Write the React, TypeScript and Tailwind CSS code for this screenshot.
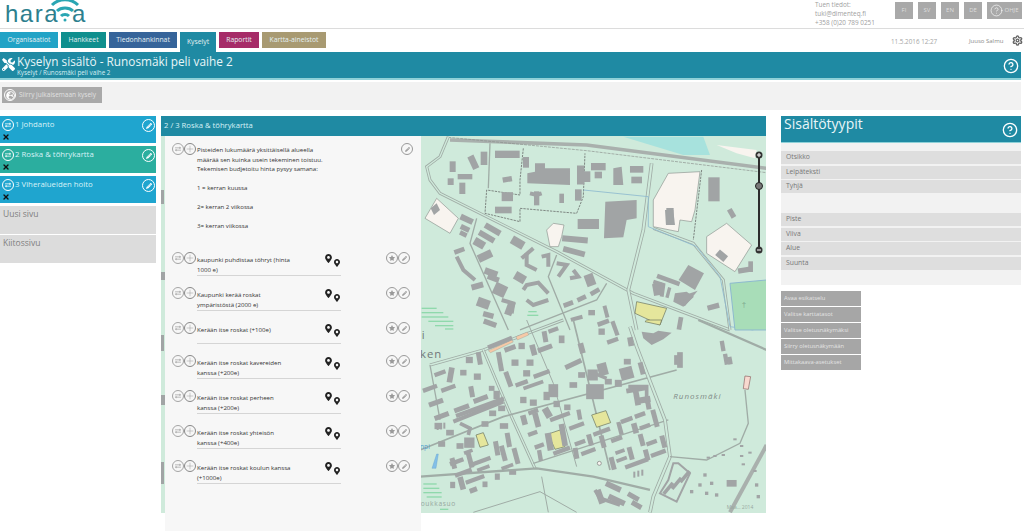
import { CircleHelp, Settings, Plus, X } from "lucide-react";
import { FaGlobeEurope, FaMapMarkerAlt, FaTools, FaStar, FaPencilAlt, FaExchangeAlt } from "react-icons/fa";

const tabs = [
  { label: "Organisaatiot", cls: "w-[58px] bg-[#22a3c6]" },
  { label: "Hankkeet", cls: "w-[45px] bg-[#0f8f8e]" },
  { label: "Tiedonhankinnat", cls: "w-[68px] bg-[#36649a]" },
  { label: "Kyselyt", cls: "w-[36px] h-[20px] bg-[#1f8aa3]" },
  { label: "Raportit", cls: "w-[40px] bg-[#a62c68]" },
  { label: "Kartta-aineistot", cls: "w-[64px] bg-[#a89a72]" },
];

const rows = [
  { h: "h-[24px]", first: "kaupunki puhdistaa töhryt (hinta", second: "1000 e)" },
  { h: "h-[24px]", first: "Kaupunki kerää roskat", second: "ympäristöstä (2000 e)" },
  { h: "h-[22px]", first: "Kerään itse roskat (+100e)", second: "" },
  { h: "h-[24px]", first: "Kerään itse roskat kavereiden", second: "kanssa (+200e)" },
  { h: "h-[24px]", first: "Kerään itse roskat perheen", second: "kanssa (+200e)" },
  { h: "h-[24px]", first: "Kerään itse roskat yhteisön", second: "kanssa (+400e)" },
  { h: "h-[24px]", first: "Kerään itse roskat koulun kanssa", second: "(+1000e)" },
];

type B = [number, number, number, number, number];

// buildings in crop coordinates: cx, cy, w, h, rotation
const northBlocks: B[] = [
  [98, 110, 16, 30, 0], [92, 155, 16, 18, 0], [160, 97, 18, 40, -25], [192, 85, 18, 38, 0], [262, 73, 72, 20, 0],
  [135, 140, 42, 14, 0], [127, 175, 16, 32, 0], [262, 148, 26, 14, -10], [318, 97, 16, 30, 0], [482, 135, 20, 55, 0],
  [500, 140, 20, 30, 0], [535, 110, 42, 20, 0], [535, 135, 20, 18, 0], [650, 118, 38, 18, 0], [650, 150, 30, 18, 0],
  [262, 200, 32, 25, 0], [425, 205, 12, 26, 0], [475, 195, 18, 32, 0], [250, 240, 48, 18, 0], [505, 282, 62, 28, 0],
  [465, 328, 75, 16, 5], [462, 365, 65, 15, 15], [218, 298, 50, 16, 30], [140, 268, 38, 16, 25], [135, 295, 26, 14, 25],
  [130, 312, 20, 12, 25], [178, 340, 32, 22, 30], [200, 320, 50, 15, 30], [195, 378, 42, 22, -25], [118, 362, 30, 12, -20],
  [293, 338, 38, 24, 30], [882, 178, 32, 70, 0], [935, 250, 14, 26, -30], [905, 377, 30, 20, 40], [745, 450, 70, 12, 20],
  [714, 478, 28, 34, -10], [745, 488, 8, 30, 15], [880, 530, 34, 14, -15], [213, 428, 38, 18, 20], [172, 468, 34, 16, -15],
  [220, 445, 34, 14, 20], [240, 480, 36, 34, 25], [190, 520, 36, 26, 20], [205, 555, 30, 14, 15], [210, 580, 38, 14, 20],
  [510, 450, 26, 34, -20], [525, 485, 28, 12, -30], [485, 505, 26, 12, -25], [445, 522, 28, 12, -20], [515, 548, 18, 14, 0],
  [558, 545, 10, 34, -15], [470, 565, 34, 10, -15], [550, 578, 34, 12, -20], [780, 580, 12, 36, 10], [300, 443, 32, 24, 30],
  [270, 535, 20, 40, 20], [975, 420, 40, 14, -10], [992, 410, 12, 30, 0], [750, 258, 20, 46, 0], [350, 205, 14, 40, 0],
];

const southBlocks: B[] = [
  [240, 68, 75, 10, -22], [375, 50, 12, 30, -10], [400, 30, 28, 10, -20], [425, 58, 14, 20, 0], [340, 90, 14, 30, -15],
  [375, 85, 42, 12, -20], [270, 85, 32, 12, -20], [305, 78, 16, 16, 0], [240, 125, 12, 55, -10], [285, 128, 18, 16, 0],
  [330, 128, 18, 16, 0], [320, 160, 18, 16, 0], [365, 162, 48, 10, -20], [265, 178, 12, 44, -20], [305, 190, 36, 10, -20],
  [340, 195, 60, 8, -20], [178, 115, 12, 35, -10], [148, 120, 18, 16, 0], [130, 158, 16, 14, 0], [172, 170, 18, 16, 0],
  [60, 160, 32, 10, -20], [92, 165, 14, 42, 10], [85, 205, 42, 10, -20], [30, 205, 42, 10, -20], [155, 215, 12, 30, -10],
  [182, 237, 42, 12, -20], [215, 205, 14, 12, 0], [230, 225, 16, 22, 0], [48, 248, 42, 12, -20], [125, 265, 44, 12, -20],
  [65, 288, 42, 12, -20], [180, 262, 150, 10, -20], [245, 265, 18, 14, 0], [218, 280, 18, 14, 0], [310, 240, 16, 16, 0],
  [340, 248, 18, 16, 0], [380, 228, 16, 22, 0], [410, 252, 16, 16, 0], [442, 262, 16, 14, 0], [400, 212, 26, 36, 0],
  [460, 195, 20, 14, 0], [485, 165, 18, 14, 0], [518, 165, 28, 30, 0], [548, 148, 26, 34, -15], [595, 190, 18, 18, 0],
  [565, 185, 18, 14, 0], [620, 160, 36, 34, -15], [622, 125, 18, 14, 0], [665, 145, 12, 34, -15], [460, 132, 50, 12, -25],
  [485, 85, 14, 28, -15], [545, 35, 16, 16, 0], [578, 62, 32, 10, -20], [585, 25, 10, 42, -20], [632, 65, 14, 24, -10],
  [525, 215, 50, 42, 0], [650, 208, 60, 12, -10], [670, 240, 40, 16, -10], [650, 230, 14, 50, -10], [685, 255, 12, 24, -10],
  [420, 290, 60, 10, -20], [470, 318, 44, 10, -20], [382, 278, 18, 28, -30], [350, 300, 14, 40, -15], [312, 300, 14, 26, -15],
  [340, 275, 28, 10, -20], [338, 340, 26, 10, -20], [358, 378, 26, 10, -20], [388, 365, 16, 50, -10], [430, 345, 14, 64, -10],
  [425, 392, 50, 10, -20], [360, 407, 10, 30, -10], [478, 284, 10, 28, -10], [468, 400, 12, 30, -10], [480, 368, 30, 10, -20],
  [510, 360, 12, 32, -15], [505, 395, 42, 10, -20], [548, 365, 12, 34, -15], [545, 335, 50, 10, -20], [600, 325, 10, 36, -15],
  [620, 300, 34, 10, -20], [660, 285, 30, 10, -20], [645, 325, 14, 28, -15], [675, 320, 30, 10, -20], [665, 360, 12, 34, -15],
  [705, 295, 12, 50, -15], [695, 368, 30, 10, -20], [730, 365, 12, 34, -15], [680, 405, 12, 30, -15], [715, 400, 44, 10, -20],
  [590, 358, 32, 10, -20], [600, 395, 26, 8, -20], [632, 400, 12, 36, -15], [605, 418, 30, 8, -20], [578, 430, 12, 36, -15],
  [650, 430, 70, 10, -20], [65, 372, 18, 14, 0], [120, 378, 18, 14, 0], [148, 368, 28, 28, 0], [55, 318, 20, 16, 0],
  [90, 338, 20, 14, 0], [195, 312, 18, 14, 0], [252, 318, 22, 14, 0], [230, 385, 12, 40, -10], [265, 360, 12, 40, -10],
  [288, 408, 12, 46, -15], [250, 400, 12, 44, -15], [145, 395, 24, 8, -20], [180, 425, 64, 10, -20], [110, 425, 40, 10, -20],
  [150, 420, 12, 44, -15], [100, 430, 12, 30, -15], [262, 440, 34, 8, -20], [125, 490, 14, 36, -15], [130, 458, 50, 10, -20],
  [165, 478, 56, 10, -20], [190, 445, 36, 8, -20], [232, 470, 12, 16, 0], [278, 458, 18, 10, 0], [98, 495, 12, 16, 0],
  [195, 493, 12, 14, 0], [160, 510, 20, 12, -20], [580, 500, 46, 14, 25], [540, 530, 16, 40, -20], [590, 540, 50, 14, 25],
  [640, 530, 34, 12, 30], [650, 555, 30, 12, 30], [780, 120, 14, 44, 0], [770, 120, 12, 26, 0], [908, 78, 10, 28, -10],
  [918, 118, 10, 30, -10], [930, 122, 10, 20, -10], [745, 505, 40, 8, -50], [770, 490, 40, 8, -50], [795, 470, 40, 8, -50],
];

const pieces: number[][] = [
  [305, 385, 340, 355], [320, 370, 320, 405, 350, 420], [365, 380, 385, 375, 385, 410],
  [410, 400, 440, 405, 415, 440], [460, 420, 475, 440, 450, 445], [310, 480, 320, 465, 355, 458, 385, 490],
  [320, 510, 340, 525, 385, 510], [110, 380, 130, 420, 165, 450], [245, 510, 280, 520, 275, 550],
  [330, 190, 350, 195, 365, 190], [700, 455, 730, 465, 725, 500], [770, 510, 815, 495, 790, 525],
];

const southPieces: number[][] = [
  [510, 155, 560, 175], [625, 200, 680, 200, 680, 250], [120, 310, 150, 325, 145, 345], [525, 510, 540, 535, 600, 555],
];

const Road = ({ p, w = 9 }: { p: string; w?: number }) => (
  <>
    <polyline points={p} fill="none" stroke="#a0aca6" strokeWidth={w} />
    <polyline points={p} fill="none" stroke="#cfeadb" strokeWidth={w - 5} />
  </>
);

const Blocks = ({ items, grow = 0 }: { items: B[]; grow?: number }) => (
  <g fill="#a1a4a5">
    {items.map((b, i) => (
      <rect
        key={i}
        x={b[0] - (b[2] + grow) / 2}
        y={b[1] - (b[3] + grow) / 2}
        width={b[2] + grow}
        height={b[3] + grow}
        transform={`rotate(${b[4]} ${b[0]} ${b[1]})`}
      />
    ))}
  </g>
);

function MapDrawing() {
  return (
    <svg className="block h-[377px] w-[605px]" viewBox="161 136 605 377">
      <rect x="161" y="136" width="605" height="377" fill="#cfeadb" />
      <g fill="#a1a4a5">
        <rect x="161" y="190" width="3" height="14" /><rect x="161" y="272" width="4" height="8" />
        <rect x="161" y="335" width="3" height="16" /><rect x="161" y="395" width="4" height="10" />
        <rect x="161" y="462" width="3" height="22" />
      </g>
      <g transform="translate(420 130) scale(0.3333)">
        <polygon points="610,20 850,20 870,75 790,75" fill="#a7e2dd" />
        <polyline points="90,30 500,45 1040,115" fill="none" stroke="#a9b0ad" strokeWidth="11" />
        <polyline points="85,22 500,62 1040,128" fill="none" stroke="#8b8f8d" strokeWidth="2" strokeDasharray="9 3" />
        <Road p="85,20 60,80 20,110 30,150 60,190 410,365 640,490 930,600" />
        <Road p="695,100 670,300 625,480 650,600" w={11} />
        <Road p="700,295 820,340 910,450 930,600" />
        <polyline points="310,55 300,150 300,195 200,180 195,250 300,275 300,235 470,250 490,200 495,70" fill="none" stroke="#6e7270" strokeWidth="2.5" strokeDasharray="7 3" />
        <polyline points="490,180 685,200 685,290 830,350 900,440 930,590 1000,600" fill="none" stroke="#8db9cf" strokeWidth="2.5" />
        <polyline points="845,120 820,330" fill="none" stroke="#6e7270" strokeWidth="2.5" strokeDasharray="7 3" />
        <polyline points="210,40 205,175" fill="none" stroke="#a0aca6" strokeWidth="4" />
        <polyline points="170,265 150,340 265,600" fill="none" stroke="#a0aca6" strokeWidth="4" />
        <polyline points="410,375 385,440 450,600" fill="none" stroke="#a0aca6" strokeWidth="4" />
        <polyline points="560,460 530,510 300,600" fill="none" stroke="#a0aca6" strokeWidth="4" />
        <polygon points="700,210 745,130 840,125 825,240 815,275 780,270 775,305 700,290" fill="#f8f4ef" stroke="#8d9490" strokeWidth="2" />
        <polygon points="860,320 920,280 995,345 945,425 860,370" fill="#f8f4ef" stroke="#8d9490" strokeWidth="2" />
        <polygon points="15,265 50,205 115,265 90,310" fill="#f8f4ef" stroke="#8d9490" strokeWidth="2" />
        <polygon points="380,300 400,280 432,285 425,320 415,350 390,350" fill="#f8f4ef" stroke="#8d9490" strokeWidth="2" />
        <polygon points="890,45 1010,60 1005,85 950,70" fill="#f8f4ef" />
        <polygon points="650,515 740,535 720,585 645,550" fill="#e5e69c" stroke="#66705a" strokeWidth="2" />
        <polygon points="930,460 1040,450 1040,600 945,600" fill="#a8ddb8" stroke="#8db9cf" strokeWidth="3" />
        <polygon points="556,215 650,210 650,265 620,270 610,322 552,325" fill="#a1a4a5" />
        <polygon points="322,130 345,125 345,100 375,100 375,115 450,115 450,165 322,160" fill="#a1a4a5" />
        <polygon points="805,405 852,430 825,480 776,450" fill="#a1a4a5" />
        <polygon points="580,115 605,110 610,165 580,165" fill="#a1a4a5" />
        <polygon points="765,490 800,485 822,500 790,530 760,515" fill="#a1a4a5" />
        <polygon points="735,240 760,240 765,285 738,285" fill="#a1a4a5" />
        <polygon points="32,235 50,220 60,240 42,255" fill="#a1a4a5" />
        <Blocks items={northBlocks} grow={2} />
        {pieces.map((p, i) => (
          <polyline key={i} points={p.join(" ")} fill="none" stroke="#a1a4a5" strokeWidth="12" />
        ))}
        <g stroke="#8fd9ac" strokeWidth="4">
          <line x1="5" y1="535" x2="50" y2="535" /><line x1="5" y1="548" x2="70" y2="548" />
          <line x1="5" y1="561" x2="85" y2="561" /><line x1="25" y1="574" x2="100" y2="574" />
          <line x1="45" y1="587" x2="100" y2="587" /><line x1="325" y1="545" x2="350" y2="545" />
          <line x1="322" y1="556" x2="355" y2="556" />
          <line x1="75" y1="597" x2="100" y2="597" />
        </g>
        <text x="965" y="530" fontSize="24" fill="#7ea88e" fontFamily="Liberation Sans, sans-serif">†</text>
      </g>
      <g transform="translate(420 320) scale(0.3333)">
        <Road p="30,135 190,90 430,0" />
        <Road p="190,90 270,280 345,445" />
        <polyline points="0,470 350,445 520,470 690,510" fill="none" stroke="#a0aca6" strokeWidth="7" />
        <polyline points="0,390 250,290 770,150" fill="none" stroke="#a0aca6" strokeWidth="5" />
        <polyline points="100,305 250,245" fill="none" stroke="#a1a4a5" strokeWidth="12" />
        <polyline points="30,135 60,300" fill="none" stroke="#a0aca6" strokeWidth="4" />
        <polyline points="340,430 745,300" fill="none" stroke="#a0aca6" strokeWidth="4" />
        <polyline points="460,0 570,450" fill="none" stroke="#a0aca6" strokeWidth="5" />
        <polyline points="320,0 400,190 470,440" fill="none" stroke="#a0aca6" strokeWidth="3" />
        <Road p="630,20 650,80 735,300 750,410 700,530 690,577" w={11} />
        <polyline points="975,210 985,310 960,370 860,420 750,410" fill="none" stroke="#a0aca6" strokeWidth="4" />
        <polyline points="1040,375 930,577" fill="none" stroke="#a9b0ad" strokeWidth="12" />
        <polyline points="835,0 1040,90" fill="none" stroke="#a0aca6" strokeWidth="7" />
        <polyline points="365,470 385,577" fill="none" stroke="#a0aca6" strokeWidth="3" />
        <polyline points="160,577 360,515 470,577" fill="none" stroke="#a0aca6" strokeWidth="3" />
        <polygon points="205,92 275,60 280,66 212,98" fill="#f6c9a7" stroke="#8d9490" />
        <polygon points="288,50 322,36 326,45 292,60" fill="#f6c9a7" stroke="#8d9490" />
        <polygon points="975,168 992,170 985,208 970,206" fill="#f8d9cf" stroke="#8d6060" strokeWidth="2" />
        <polygon points="515,285 558,272 572,308 530,322" fill="#e5e69c" stroke="#66705a" strokeWidth="2" />
        <polygon points="168,345 190,338 205,375 180,382" fill="#e5e69c" stroke="#66705a" strokeWidth="2" />
        <polygon points="385,342 420,330 435,380 405,388" fill="#e5e69c" stroke="#66705a" strokeWidth="2" />
        <polygon points="680,0 725,0 720,15 675,5" fill="#e5e69c" stroke="#66705a" strokeWidth="2" />
        <polygon points="50,402 55,402 48,445 36,445" fill="#83bfe8" stroke="#5b9bc9" strokeWidth="1" />
        <polygon points="665,35 700,40 715,32 755,38 730,58 695,75 670,55" fill="#a1a4a5" />
        <Blocks items={southBlocks} grow={3} />
        {southPieces.map((p, i) => (
          <polyline key={i} points={p.join(" ")} fill="none" stroke="#a1a4a5" strokeWidth="11" />
        ))}
        <g fill="#a1a4a5">
          <rect x="60" y="310" width="6" height="18" /><rect x="70" y="308" width="6" height="18" /><rect x="50" y="312" width="6" height="18" />
          <rect x="640" y="455" width="6" height="18" /><rect x="652" y="452" width="6" height="18" /><rect x="664" y="449" width="6" height="18" />
          <rect x="860" y="410" width="10" height="6" /><rect x="880" y="405" width="10" height="6" /><rect x="905" y="402" width="10" height="6" />
          <rect x="940" y="355" width="10" height="6" /><rect x="960" y="375" width="10" height="6" /><rect x="985" y="395" width="10" height="6" />
          <rect x="960" y="405" width="10" height="6" /><rect x="965" y="430" width="10" height="6" /><rect x="1000" y="450" width="10" height="6" />
          <rect x="850" y="460" width="10" height="10" /><rect x="835" y="490" width="10" height="10" /><rect x="810" y="510" width="10" height="10" />
          <rect x="870" y="485" width="10" height="10" /><rect x="855" y="515" width="10" height="10" /><rect x="885" y="520" width="10" height="10" />
          <rect x="920" y="480" width="30" height="20" /><rect x="1005" y="490" width="10" height="10" /><rect x="1010" y="525" width="10" height="10" />
        </g>
        <polygon points="760,430 775,430 810,460 770,545 720,520 745,480" fill="none" stroke="#a1a4a5" strokeWidth="6" />
        <circle cx="538" cy="430" r="6" fill="#f8f4ef" stroke="#777" strokeWidth="2" />
        <g stroke="#8fd9ac" strokeWidth="4">
          <line x1="10" y1="492" x2="50" y2="492" /><line x1="10" y1="505" x2="58" y2="505" /><line x1="10" y1="518" x2="65" y2="518" />
          <line x1="20" y1="531" x2="65" y2="531" /><line x1="60" y1="568" x2="85" y2="568" />
        </g>
        <g fill="#72787a" fontFamily="Open Sans, sans-serif">
          <text x="5" y="58" fontSize="34">i</text>
          <text x="0" y="115" fontSize="34" letterSpacing="3">ken</text>
        </g>
        <text x="760" y="237" fontSize="24" fontStyle="italic" letterSpacing="3" fill="#7f8a88" fontFamily="Open Sans, sans-serif">Runosmäki</text>
        <text x="0" y="388" fontSize="20" fill="#5aa3d0" fontFamily="Open Sans, sans-serif">npi</text>
        <text x="2" y="558" fontSize="20" letterSpacing="2" fill="#97a8a0" fontFamily="Open Sans, sans-serif">oukkasuo</text>
        <text x="920" y="566" fontSize="15" fill="#97a8a0" fontFamily="Open Sans, sans-serif">Maa... 2014</text>
      </g>
      <g>
        <rect x="758" y="155" width="2" height="95" fill="#2c2c2c" />
        <circle cx="759" cy="155" r="3.5" fill="#333" />
        <rect x="757" y="154.5" width="4" height="1" fill="#fff" />
        <rect x="758.5" y="153" width="1" height="4" fill="#fff" />
        <circle cx="759" cy="186" r="3.5" fill="#777" stroke="#222" />
        <circle cx="759" cy="250" r="3.5" fill="#333" />
        <rect x="757" y="249.5" width="4" height="1" fill="#fff" />
      </g>
    </svg>
  );
}

const Ring = ({ children, cls = "border-[#9a9a9a] text-[#9a9a9a]" }: { children: React.ReactNode; cls?: string }) => (
  <span className={`flex h-[12px] w-[12px] shrink-0 items-center justify-center rounded-full border ${cls}`}>{children}</span>
);

const LeftTools = () => (
  <div className="flex w-[25px] shrink-0">
    <Ring cls="border-[#a5a5a5] text-[#a5a5a5]"><FaExchangeAlt size={6} /></Ring>
    <Ring cls="border-[#888] text-[#888]"><Plus size={10} strokeWidth={1} /></Ring>
  </div>
);

function QuestionRow({ first, second, h }: { first: string; second: string; h: string }) {
  return (
    <div className="flex pl-[7px] pt-[11px]">
      <LeftTools />
      <div className={`relative flex w-[144px] border-b border-[#d5d5d5] pt-[3px] leading-[9.5px] ${h}`}>
        <div className="w-[128px]">
          <p>{first}</p>
          {second && <p>{second}</p>}
        </div>
        <FaMapMarkerAlt size={9} className="absolute left-[127px] top-[2px] text-[#222]" />
        <FaMapMarkerAlt size={8} className="absolute left-[136px] top-[7px] text-[#222]" />
      </div>
      <div className="ml-[45px] flex">
        <Ring><FaStar size={6} /></Ring>
        <Ring><FaPencilAlt size={5} /></Ring>
      </div>
    </div>
  );
}

function SideItem({ label, bg }: { label: string; bg: string }) {
  return (
    <div className={`relative h-[27px] ${bg} text-[7.8px] leading-[10px] text-[#d8f2f7]`}>
      <div className="flex items-start pl-[2px] pt-[3px]">
        <Ring cls="border-white text-white"><FaExchangeAlt size={6} /></Ring>
        <span className="pl-[1px]">{label}</span>
      </div>
      <X size={8} strokeWidth={4} className="ml-[2px] mt-[2px] text-[#111]" />
      <span className="absolute right-[1px] top-[3px] flex h-[13px] w-[13px] items-center justify-center rounded-full border border-white text-white">
        <FaPencilAlt size={6} />
      </span>
    </div>
  );
}

export default function App() {
  return (
    <div className="h-[531px] w-[1024px] overflow-hidden bg-white font-['Open_Sans',sans-serif] text-[#444]">
      {/* top header */}
      <div className="flex h-[29px] border-b border-[#dcdcdc]">
        <div className="h-[28px] w-[815px] pl-[5px]">
          <div className="relative flex h-[28px] font-['Liberation_Sans',sans-serif] text-[24px] leading-[27px] tracking-[1.5px] text-[#2d7f8e]">
            <span>hara</span>
            <span className="w-[13px]" />
            <span>a</span>
            <svg viewBox="0 0 40 24" className="absolute left-[40px] top-[-2px] h-[24px] w-[40px]" fill="none" stroke="#2aa6b3" strokeWidth="3">
              <path d="M7 7C14 0 26 0 33 7" />
              <path d="M12 13C16 9 24 9 28 13" />
              <path d="M16 18C18 16 22 16 24 18" />
              <circle cx="20" cy="22" r="1.5" fill="#2aa6b3" stroke="none" />
            </svg>
          </div>
        </div>
        <div className="w-[80px] text-[6.4px] leading-[9px] text-[#a0a0a0]">
          <p>Tuen tiedot:</p>
          <p>tuki@dimenteq.fi</p>
          <p>+358 (0)20 789 0251</p>
        </div>
        <div className="flex gap-[5px] pt-[2px] text-[6px] text-[#dedede]">
          {["FI", "SV", "EN", "DE"].map((l) => (
            <span key={l} className="flex h-[17px] w-[18px] items-center justify-center bg-[#a9a9a9]">{l}</span>
          ))}
          <span className="flex h-[17px] w-[35px] items-center justify-center gap-[1px] bg-[#a9a9a9]">
            <CircleHelp size={13} strokeWidth={1.2} className="text-white" />
            OHJE
          </span>
        </div>
      </div>

      {/* nav */}
      <div className="flex h-[23px] items-start pt-[3px]">
        <div className="flex w-[891px] gap-[3px]">
          {tabs.map((t) => (
            <div key={t.label} className={`flex h-[16px] items-center justify-center text-[6.8px] text-[#e4f0f2] ${t.cls}`}>
              {t.label}
            </div>
          ))}
        </div>
        <span className="mt-[5px] w-[78px] text-[6.3px] text-[#a5a5a5]">11.5.2016 12:27</span>
        <span className="mt-[5px] w-[43px] text-[6px] text-[#8a8a8a]">Juuso Salmu</span>
        <Settings size={11} strokeWidth={3} className="mt-[3px] text-[#666]" />
      </div>

      {/* title bar */}
      <div className="flex h-[28px] w-[1021px] items-start justify-between border-b-2 border-[#8ed1d8] bg-[#1f8aa3] text-white">
        <div className="flex pl-[2px] pt-[2px]">
          <FaTools size={13} className="mr-[2px] mt-[4px]" />
          <div>
            <h1 className="text-[11.8px] leading-[15px] text-[#e9f6f8]">Kyselyn sisältö - Runosmäki peli vaihe 2</h1>
            <p className="text-[6.3px] leading-[8px] text-[#d4ecf1]">Kyselyt / Runosmäki peli vaihe 2</p>
          </div>
        </div>
        <CircleHelp size={16} strokeWidth={2} className="mr-[2px] mt-[6px]" />
      </div>
      <div className="mt-[2px] h-[28px] w-[1021px] bg-[#f2f2f2] pl-[2px] pt-[5px]">
        <div className="flex h-[16px] w-[100px] items-center bg-[#a9a9a9] pl-[2px] text-[6.5px] text-[#e0e0e0]">
          <span className="mr-[3px] flex h-[12px] w-[12px] items-center justify-center rounded-full border border-white text-white">
            <FaGlobeEurope size={9} />
          </span>
          Siirry julkaisemaan kysely
        </div>
      </div>

      {/* main */}
      <div className="mt-[6px] flex items-start">
        <div className="flex w-[156px] shrink-0 flex-col gap-[3px]">
          <SideItem label="1 Johdanto" bg="bg-[#1fa5cf]" />
          <SideItem label="2 Roska & töhrykartta" bg="bg-[#2bae9f]" />
          <SideItem label="3 Viheralueiden hoito" bg="bg-[#1fa5cf]" />
          <div className="h-[28px] bg-[#dcdcdc] pl-[3px] pt-[1px] text-[8.5px] leading-[14px] text-[#808080]">Uusi sivu</div>
          <div className="-mt-[2px] h-[28px] bg-[#dcdcdc] pl-[3px] pt-[1px] text-[8.5px] leading-[14px] text-[#808080]">Kiitossivu</div>
        </div>

        <div className="relative ml-[5px] h-[415px] w-[605px] shrink-0">
          <div className="flex h-[20px] items-center bg-[#1f8aa3] pl-[3px] text-[7.7px] text-[#d8f2f7]">2 / 3 Roska & töhrykartta</div>
          <MapDrawing />
          <div className="absolute left-[4px] top-[20px] h-[395px] w-[256px] bg-[#f7f7f7] pt-[7px] text-[6.1px] text-[#333]">
            <div className="flex pl-[7px]">
              <LeftTools />
              <div className="w-[200px] pt-[2px] leading-[9.7px]">
                <p>Pisteiden lukumäärä yksittäisellä alueella</p>
                <p>määrää sen kuinka usein tekeminen toistuu.</p>
                <p>Tekemisen budjetoitu hinta pysyy samana:</p>
                <p className="mt-[9px]">1 = kerran kuussa</p>
                <p className="mt-[9px]">2= kerran 2 viikossa</p>
                <p className="mt-[9px]">3= kerran viikossa</p>
              </div>
              <div className="ml-[4px]">
                <Ring><FaPencilAlt size={5} /></Ring>
              </div>
            </div>
            <div className="mt-[11px] flex flex-col">
              {rows.map((r) => (
                <QuestionRow key={r.first} {...r} />
              ))}
            </div>
          </div>
        </div>

        <div className="ml-[15px] w-[240px] shrink-0">
          <div className="flex h-[27px] justify-between border-b border-[#8ed1d8] bg-[#1f8aa3] pl-[3px] text-white">
            <span className="text-[14px] leading-[16px] text-[#e9f6f8]">Sisältötyypit</span>
            <CircleHelp size={16} strokeWidth={2} className="mr-[3px] mt-[6px]" />
          </div>
          <div className="flex h-[142px] flex-col gap-[1.5px] bg-[#f2f2f2] pt-[8px] text-[6.8px] text-[#777]">
            {["Otsikko", "Leipäteksti", "Tyhjä"].map((l) => (
              <div key={l} className="flex h-[13px] items-center bg-[#dedede] pl-[5px]">{l}</div>
            ))}
            <div className="h-[17px]" />
            {["Piste", "Viiva", "Alue", "Suunta"].map((l) => (
              <div key={l} className="flex h-[13px] items-center bg-[#dedede] pl-[5px]">{l}</div>
            ))}
          </div>
          <div className="mt-[6px] flex w-[80px] flex-col gap-[1.5px] text-[5.8px] text-[#e4e4e4]">
            {["Avaa esikatselu", "Valitse karttatasot", "Valitse oletusnäkymäksi", "Siirry oletusnäkymään", "Mittakaava-asetukset"].map((l) => (
              <div key={l} className="flex h-[14.5px] items-center bg-[#a6a6a6] pl-[3px]">{l}</div>
            ))}
          </div>
        </div>
      </div>
    </div>
  );
}
